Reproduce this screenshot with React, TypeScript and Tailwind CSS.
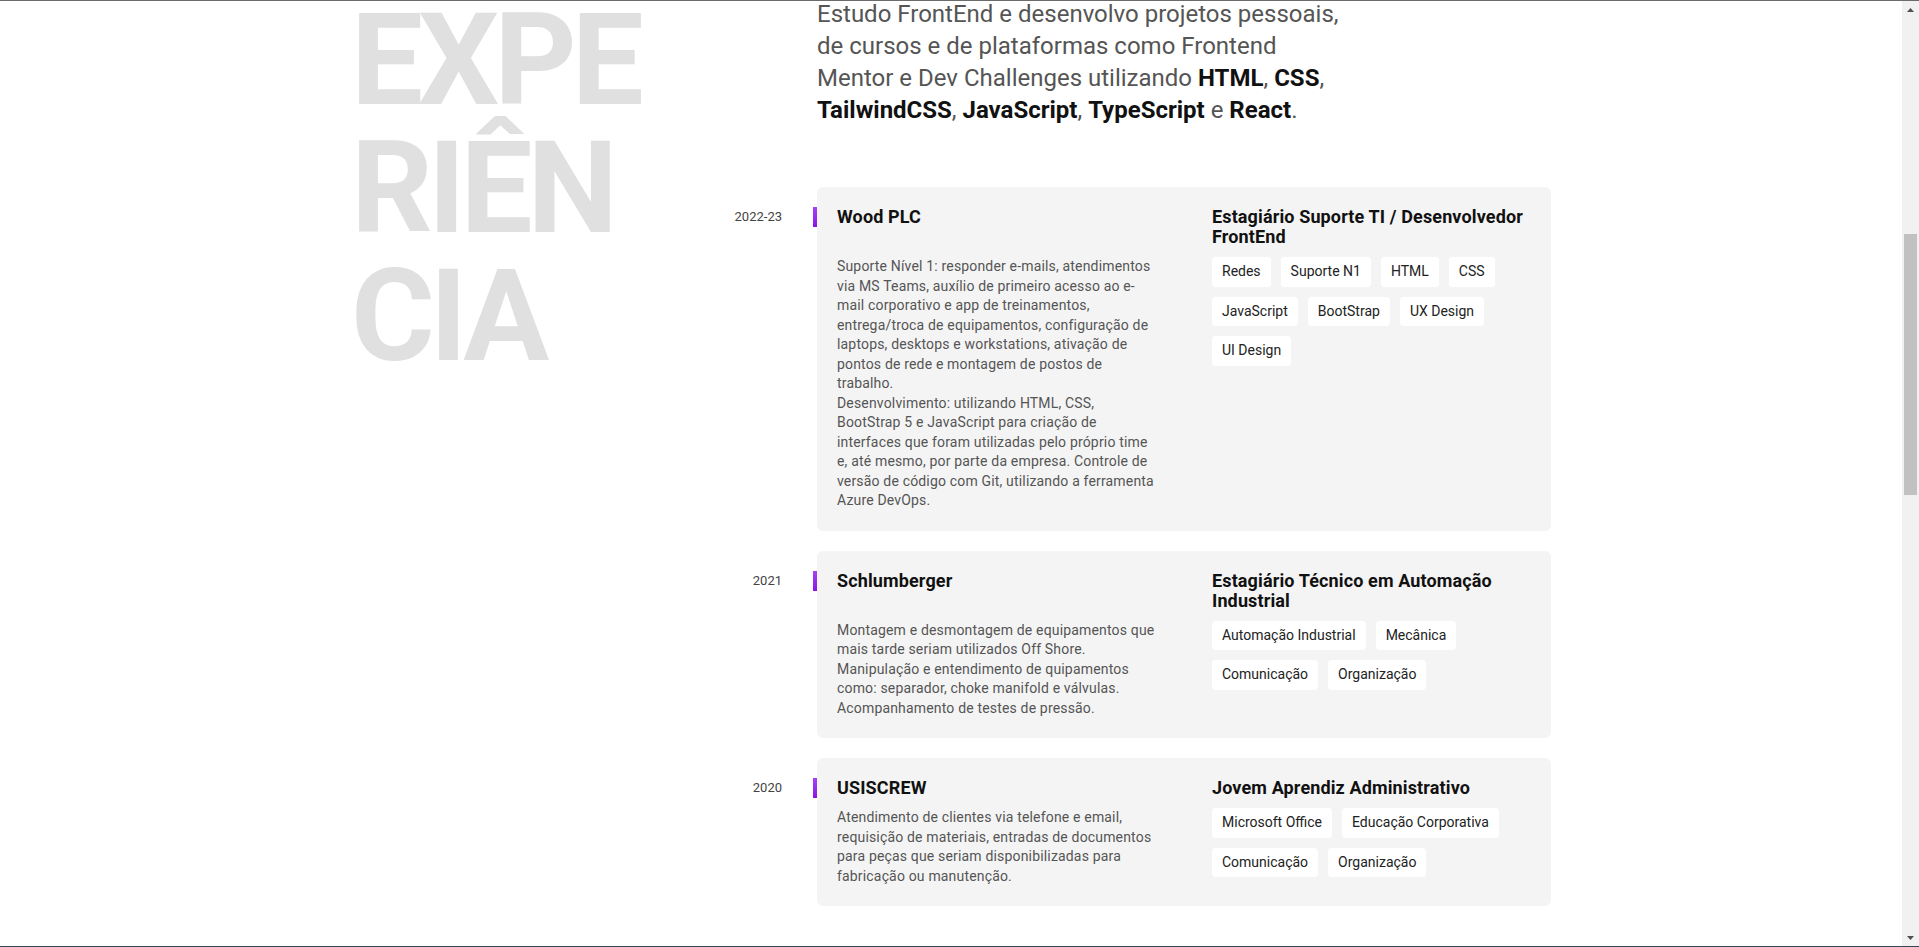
import { useLayoutEffect, useRef, useState } from "react";

type Job = {
  period: string;
  company: string;
  role: string;
  description: string[];
  skills: string[];
};

const jobs: Job[] = [
  {
    period: "2022-23",
    company: "Wood PLC",
    role: "Estagiário Suporte TI / Desenvolvedor FrontEnd",
    description: [
      "Suporte Nível 1: responder e-mails, atendimentos via MS Teams, auxílio de primeiro acesso ao e-mail corporativo e app de treinamentos, entrega/troca de equipamentos, configuração de laptops, desktops e workstations, ativação de pontos de rede e montagem de postos de trabalho.",
      "Desenvolvimento: utilizando HTML, CSS, BootStrap 5 e JavaScript para criação de interfaces que foram utilizadas pelo próprio time e, até mesmo, por parte da empresa. Controle de versão de código com Git, utilizando a ferramenta Azure DevOps.",
    ],
    skills: ["Redes", "Suporte N1", "HTML", "CSS", "JavaScript", "BootStrap", "UX Design", "UI Design"],
  },
  {
    period: "2021",
    company: "Schlumberger",
    role: "Estagiário Técnico em Automação Industrial",
    description: [
      "Montagem e desmontagem de equipamentos que mais tarde seriam utilizados Off Shore. Manipulação e entendimento de quipamentos como: separador, choke manifold e válvulas. Acompanhamento de testes de pressão.",
    ],
    skills: ["Automação Industrial", "Mecânica", "Comunicação", "Organização"],
  },
  {
    period: "2020",
    company: "USISCREW",
    role: "Jovem Aprendiz Administrativo",
    description: [
      "Atendimento de clientes via telefone e email, requisição de materiais, entradas de documentos para peças que seriam disponibilizadas para fabricação ou manutenção.",
    ],
    skills: ["Microsoft Office", "Educação Corporativa", "Comunicação", "Organização"],
  },
];

const JobCard = ({ job }: { job: Job }) => (
  <div className="flex items-start">
    <span className="mt-5 w-[112px] shrink-0 pr-[31px] text-right text-[13px] leading-5 text-[#444]">
      {job.period}
    </span>
    <span className="mt-5 h-5 w-1 shrink-0 bg-linear-to-b from-[#a640f4] to-[#8a10e6]" />
    <div className="grid flex-1 grid-cols-2 gap-x-14 gap-y-2.5 rounded-md bg-[#f4f4f4] p-5">
      <h3 className="text-lg font-bold leading-5 tracking-[0.13px] text-[#111]">{job.company}</h3>
      <h4 className="text-lg font-bold leading-5 tracking-[0.13px] text-[#111]">{job.role}</h4>
      <div className="text-sm leading-[19.5px] tracking-[0.17px] text-[#555]">
        {job.description.map((text) => (
          <p key={text}>{text}</p>
        ))}
      </div>
      <ul className="flex flex-wrap content-start gap-2.5">
        {job.skills.map((skill) => (
          <li
            key={skill}
            className="rounded bg-white px-2.5 py-[5px] text-sm leading-[19.5px] text-[#222]"
          >
            {skill}
          </li>
        ))}
      </ul>
    </div>
  </div>
);

// the browser's scrollbar, drawn since the headless page hides it
const Scrollbar = ({ top, height }: { top: number; height: number }) => (
  <div className="flex w-[17px] shrink-0 flex-col bg-[#f1f1f1]">
    <div className="flex h-[17px] items-center justify-center">
      <svg width="7" height="4" viewBox="0 0 7 4">
        <path d="M3.5 0 7 4H0z" fill="#505050" />
      </svg>
    </div>
    <div className="relative flex-1">
      <div className="absolute inset-x-[2px] bg-[#c1c1c1]" style={{ top, height }} />
    </div>
    <div className="flex h-[17px] items-center justify-center">
      <svg width="7" height="4" viewBox="0 0 7 4">
        <path d="M0 0h7L3.5 4z" fill="#505050" />
      </svg>
    </div>
  </div>
);

export default function App() {
  const scrollRef = useRef<HTMLDivElement>(null);
  const introRef = useRef<HTMLParagraphElement>(null);
  const [thumb, setThumb] = useState({ top: 0, height: 0 });

  // keep the page where the screenshot was taken: experience section, intro cut at the top
  useLayoutEffect(() => {
    const box = scrollRef.current;
    const intro = introRef.current;
    if (!box || !intro) return;
    box.scrollTop = intro.getBoundingClientRect().top - box.getBoundingClientRect().top + 3;
    const track = box.clientHeight - 34;
    setThumb({
      top: (box.scrollTop / box.scrollHeight) * track,
      height: (box.clientHeight / box.scrollHeight) * track,
    });
  }, []);

  return (
    <div className="flex h-screen border-y border-t-[#6b6b6b] border-b-[#3b4452] bg-white font-[Roboto,sans-serif]">
      <div ref={scrollRef} className="flex-1 overflow-hidden">
        <div className="min-h-[3298px] pt-[778px]">
          <section className="mx-auto flex max-w-[1200px]">
            <aside className="w-[350px] shrink-0">
              <h2 className="-mt-0.5 text-9xl font-bold uppercase leading-none tracking-[-5px] text-[#e0e0e0]">
                <span className="block">EXPE</span>
                <span className="block">RIÊN</span>
                <span className="block">CIA</span>
              </h2>
            </aside>
            <div className="flex-1">
              <p ref={introRef} className="ml-[116px] max-w-[536px] text-2xl text-[#555]">
                Estudo FrontEnd e desenvolvo projetos pessoais, de cursos e de plataformas como
                Frontend Mentor e Dev Challenges utilizando <b className="text-[#111]">HTML</b>,{" "}
                <b className="text-[#111]">CSS</b>, <b className="text-[#111]">TailwindCSS</b>,{" "}
                <b className="text-[#111]">JavaScript</b>, <b className="text-[#111]">TypeScript</b> e{" "}
                <b className="text-[#111]">React</b>.
              </p>
              <div className="mt-[61px] flex flex-col gap-5">
                {jobs.map((job) => (
                  <JobCard key={job.company} job={job} />
                ))}
              </div>
            </div>
          </section>
        </div>
      </div>
      <Scrollbar top={thumb.top} height={thumb.height} />
    </div>
  );
}
